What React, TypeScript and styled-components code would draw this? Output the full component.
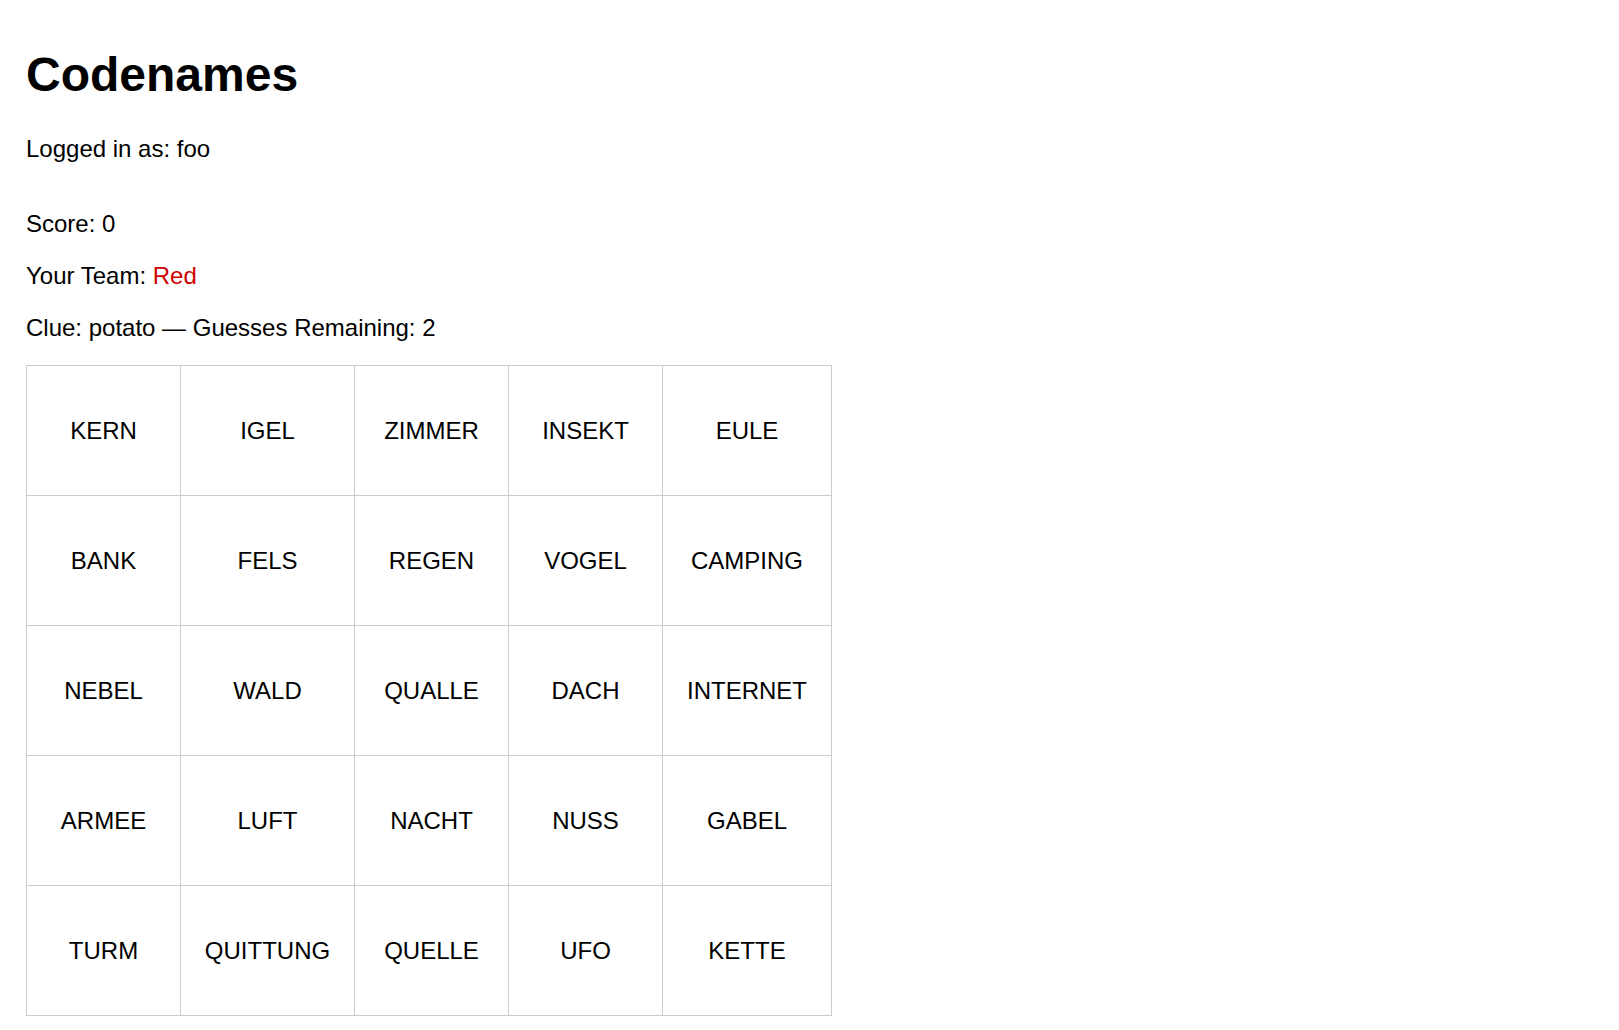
import React from 'react';
import styled, { createGlobalStyle } from 'styled-components';

const GlobalStyle = createGlobalStyle`
    html, body {
        margin: 0;
        padding: 0;
        background: #ffffff;
    }
    body {
        font-family: 'Liberation Sans', Arial, sans-serif;
        color: #000000;
    }
`;

const Page = styled.div`
    padding: 15px 26px 0;
    font-size: 24px;
`;

const Title = styled.h1`
    margin: 32px 0 33px;
    font-size: 48px;
    font-weight: 700;
`;

const Line = styled.p<{ $gapAfter?: number }>`
    margin: 0 0 ${({ $gapAfter }) => $gapAfter ?? 24}px;
`;

const TeamName = styled.span`
    color: #cc0000;
`;

const Board = styled.div`
    display: grid;
    grid-template-columns: 154px 174px 154px 154px 169px;
    grid-auto-rows: 130px;
    width: max-content;
    border-top: 1px solid #cccccc;
    border-left: 1px solid #cccccc;
`;

const Card = styled.div`
    display: flex;
    align-items: center;
    justify-content: center;
    border-right: 1px solid #cccccc;
    border-bottom: 1px solid #cccccc;
    font-size: 24px;
    cursor: pointer;
`;

const words = [
    'KERN', 'IGEL', 'ZIMMER', 'INSEKT', 'EULE',
    'BANK', 'FELS', 'REGEN', 'VOGEL', 'CAMPING',
    'NEBEL', 'WALD', 'QUALLE', 'DACH', 'INTERNET',
    'ARMEE', 'LUFT', 'NACHT', 'NUSS', 'GABEL',
    'TURM', 'QUITTUNG', 'QUELLE', 'UFO', 'KETTE',
];

function App(): React.ReactElement {
    return (
        <>
            <GlobalStyle />
            <Page>
                <Title>Codenames</Title>
                <Line $gapAfter={47}>Logged in as: foo</Line>
                <Line>Score: 0</Line>
                <Line>
                    Your Team: <TeamName>Red</TeamName>
                </Line>
                <Line $gapAfter={23}>Clue: potato — Guesses Remaining: 2</Line>
                <Board>
                    {words.map((word) => (
                        <Card key={word}>{word}</Card>
                    ))}
                </Board>
            </Page>
        </>
    );
}

export default App;
